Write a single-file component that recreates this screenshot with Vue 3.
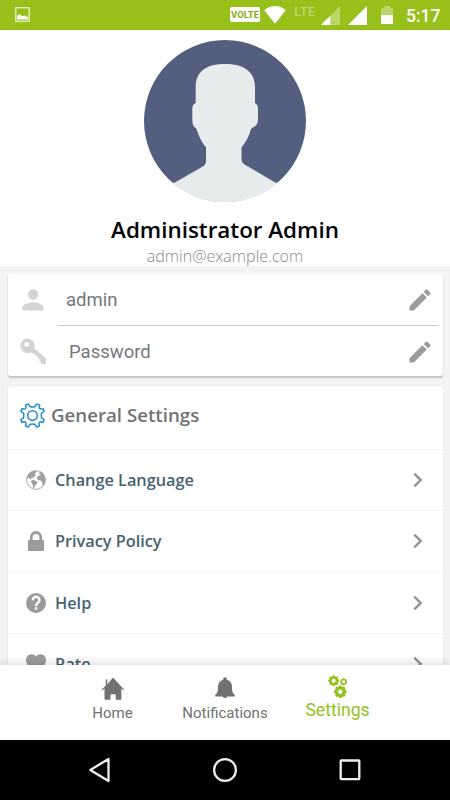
<script setup>
const fields = [
  { label: 'admin', icon: 'person' },
  { label: 'Password', icon: 'key' },
]
const rows = [
  { label: 'Change Language', icon: 'globe' },
  { label: 'Privacy Policy', icon: 'lock' },
  { label: 'Help', icon: 'help' },
  { label: 'Rate', icon: 'heart' },
]

function gear(cx, cy, teeth, outer, inner) {
  const points = []
  const step = (Math.PI * 2) / teeth
  for (let i = 0; i < teeth; i++) {
    const a = i * step - Math.PI / 2
    for (const [offset, r] of [[-0.3, inner], [-0.2, outer], [0.2, outer], [0.3, inner]]) {
      const t = a + offset * step
      points.push(`${(cx + r * Math.cos(t)).toFixed(2)} ${(cy + r * Math.sin(t)).toFixed(2)}`)
    }
  }
  return `M${points.join('L')}Z`
}
function ring(cx, cy, r) {
  return `M${cx - r} ${cy}a${r} ${r} 0 1 0 ${2 * r} 0a${r} ${r} 0 1 0 ${-2 * r} 0Z`
}
const gears = [
  gear(5.7, 5.7, 8, 5.6, 4.7) + ring(5.7, 5.7, 2),
  gear(15.6, 6.8, 8, 3.7, 3.1) + ring(15.6, 6.8, 1.5),
  gear(12.3, 16.7, 8, 6.4, 5.5) + ring(12.3, 16.7, 2.2),
].join('')
</script>

<template>
  <div class="screen">
    <div class="status">
      <svg class="picture" width="15" height="15" viewBox="0 0 15 15">
        <rect x=".75" y=".75" width="13.5" height="13.5" fill="none" stroke="#dcebb0" stroke-width="1.5" />
        <path d="M2 12.5V9l1.5-1.3 1.4-.4 2.2 2.2 2-1 2 1 1.9.5v2.5z" fill="#fff" />
      </svg>
      <span class="volte">VOLTE</span>
      <svg class="wifi" width="22" height="18" viewBox="0 0 22 18"><path d="M.3 4.2Q11-4 21.700 4.200L11 17.800z" fill="#fff" /></svg>
      <span class="lte">LTE</span>
      <svg class="signal-weak" width="19" height="19" viewBox="0 0 19 19">
        <path d="M0 19 19 0v19z" fill="#b9d766" /><path d="M0 19 9.300 9.700V19z" fill="#fff" />
      </svg>
      <svg class="signal" width="19" height="19" viewBox="0 0 19 19"><path d="M0 19 19 0v19z" fill="#fff" /></svg>
      <svg class="battery" width="12" height="18" viewBox="0 0 12 18">
        <path d="M0 3q0-1 1-1h2V0h6v2h2q1 0 1 1v6H0z" fill="#b9d766" /><path d="M0 9h12v8q0 1-1 1H1q-1 0-1-1z" fill="#fff" />
      </svg>
      <span class="time">5:17</span>
    </div>

    <header class="profile">
      <svg class="avatar" width="162" height="162" viewBox="0 0 162 162">
        <defs>
          <clipPath id="disc"><circle cx="81" cy="81" r="81" /></clipPath>
          <clipPath id="shoulders"><path d="M0 142.700h162V162H0z" /></clipPath>
        </defs>
        <circle cx="81" cy="81" r="81" fill="#545f80" />
        <circle cx="81" cy="81" r="81.300" fill="#e6ecec" clip-path="url(#shoulders)" />
        <path clip-path="url(#disc)" d="M81 24C63 24 51.700 31 51.700 47v16c-2.500 1-3.400 3-3.400 6v11c0 4 1 7 4 8.500 2.500 8 5.700 14 9.700 19v13c0 3-1 5-4 6.500L30 143v2h102v-2l-28-16.500c-4-2-6.500-4-6.500-6.500v-12.500c4-5 7.500-11 9.700-19 4-1.500 6.800-4.500 6.800-8.500V69c0-3-1-5-3-6V47c0-16-12-23-30-23z" fill="#e6ecec" />
      </svg>
      <h1 class="name">Administrator Admin</h1>
      <p class="email">admin@example.com</p>
    </header>

    <main class="content">
      <section class="card account">
        <div v-for="f in fields" :key="f.label" class="field" :class="f.icon">
          <div class="field-icon">
            <svg v-if="f.icon === 'person'" width="22" height="22" viewBox="0 0 22 22" fill="#d3d3d3">
              <circle cx="11" cy="5.500" r="5.200" /><path d="M.5 21.500v-3C.5 15.500 6 13.500 11 13.500s10.500 2 10.500 5v3z" />
            </svg>
            <svg v-else width="26" height="26" viewBox="0 0 26 26" fill="#d3d3d3" fill-rule="evenodd">
              <path d="M7.700.5a7.300 7.300 0 1 0 3.300 13.800l1.300 1.200 3 .2.300 2.300 2.200.2.200 1.300 1.400 1.100v2.600h1.700v2.500l4.800.2v-5.300L14.200 10.200A7.300 7.300 0 0 0 7.700.5zM6.700 4a2.400 2.400 0 1 1 0 4.800 2.400 2.400 0 0 1 0-4.800z" />
            </svg>
          </div>
          <div class="field-body">
            <span class="value">{{ f.label }}</span>
            <svg width="28" height="28" viewBox="0 0 24 24" fill="#9b9b9b">
              <path d="M3 17.250V21h3.750L17.810 9.940l-3.750-3.750zM20.710 7.040a1 1 0 0 0 0-1.410l-2.340-2.340a1 1 0 0 0-1.410 0l-1.830 1.830 3.750 3.750z" />
            </svg>
          </div>
        </div>
      </section>

      <section class="card settings">
        <div class="heading">
          <svg width="25" height="25" viewBox="0 0 26 26" fill="none" stroke="#2490cf" stroke-width="1.600" stroke-linejoin="round">
            <circle cx="13" cy="13" r="5" />
            <path d="M8.700 1 10.300 3.600Q13 4.600 15.700 3.600L17.300 1 20.500 2.200 19.900 5.200Q20.700 6.300 22.500 6.300L24.100 6 25 8.700 22.500 10.200Q21.600 13 22.500 15.800L25 17.300 24.100 20 21.500 19.500Q20 20 19.700 21.200L20.300 23.800 17.300 25 15.700 22.400Q13 21.400 10.300 22.400L8.700 25 5.700 23.800 6.300 21.200Q6 20 4.500 19.500L1.900 20 1 17.300 3.500 15.800Q4.400 13 3.500 10.200L1 8.700 1.900 6 4.500 6.500Q6 6 6.300 4.800L5.700 2.200Z" />
          </svg>
          <h2>General Settings</h2>
        </div>
        <div v-for="r in rows" :key="r.label" class="row">
          <svg v-if="r.icon === 'globe'" class="row-icon" width="20" height="20" viewBox="0 0 20 20">
            <circle cx="10" cy="10" r="9.400" fill="#fff" stroke="#aaa" />
            <path d="M6 1.200 10.800.7 10 3 8.200 3.500 9.900 5 8 7.200 5.500 8 4.400 9.500 2.500 7.700.8 8.300C1.300 5 3 2.600 6 1.200zM5.800 10.200l2-.3 3.700 2-.7 2.200-2 1.600-.8 2.700-1-.3-.4-3.700-1.600-2.300zM12.700 3.200l1.800-1.600C17.500 3 19.200 6 19.400 9.500c.1 2.500-.9 5-2.500 6.800l-.6-2.200-.2-2.700-1.700-1-2.600-.3-1-2 1.300-2.400 2.400-.4-.1-1.100z" fill="#a0a0a0" />
          </svg>
          <svg v-else-if="r.icon === 'lock'" class="row-icon" width="20" height="20" viewBox="0 0 20 20">
            <path d="M5.200 11V6.300a4.800 4.800 0 0 1 9.600 0V11" fill="none" stroke="#9b9b9b" stroke-width="2.800" /><rect x="2" y="9" width="16" height="11" rx="1" fill="#9b9b9b" />
          </svg>
          <svg v-else-if="r.icon === 'help'" class="row-icon" width="20" height="20" viewBox="0 0 20 20">
            <circle cx="10" cy="10" r="10" fill="#9b9b9b" /><path d="M6.800 7.200A3.300 3.300 0 1 1 12 9.800Q10.100 11.100 10.100 13" fill="none" stroke="#fff" stroke-width="2.400" /><circle cx="10.100" cy="15.500" r="1.400" fill="#fff" />
          </svg>
          <svg v-else class="row-icon" width="20" height="20" viewBox="0 0 20 20"><path d="M10 2.500C7.300-1.500 0-.2 0 6.300c0 5 5.500 9.200 10 12.700 4.500-3.500 10-7.700 10-12.700C20-.2 12.700-1.500 10 2.500z" fill="#9b9b9b" /></svg>
          <span class="row-label">{{ r.label }}</span>
          <svg width="10" height="16" viewBox="0 0 10 16" fill="none" stroke="#969696" stroke-width="2.500"><path d="m1.300 1.600 6.500 6.400-6.500 6.400" /></svg>
        </div>
      </section>
    </main>

    <nav class="tabs">
      <div class="tab">
        <svg width="24" height="23" viewBox="0 0 24 23" fill="#717171"><path d="M4.800 2.500h1.500v5L12 .5 23 12.400l-.7.900-1.900-1.800V22q0 .8-.8.800h-4.900v-4.500q0-1-1-1h-3.200q-1 0-1 1v4.500H4.300q-.8 0-.8-.8V11.500l-2 1.800-.7-.9 4-3.800z" /></svg>
        <span>Home</span>
      </div>
      <div class="tab">
        <svg width="22" height="23" viewBox="0 0 22 23" fill="#717171"><path d="M9.200 2.800V2a1.800 1.800 0 0 1 3.600 0v.8c3.500.7 5.200 3.400 5.200 7 0 4.800.6 6.500 2.800 8.200v1.500h-7.600a2.300 2.300 0 0 1-4.400 0H1.200V18C3.400 16.300 4 14.600 4 9.800c0-3.600 1.700-6.300 5.200-7z" /></svg>
        <span>Notifications</span>
      </div>
      <div class="tab active">
        <svg width="20" height="24" viewBox="0 0 20 24"><path :d="gears" fill="#95c11f" fill-rule="evenodd" /></svg>
        <span>Settings</span>
      </div>
    </nav>

    <div class="system">
      <svg width="22" height="26" viewBox="0 0 22 26"><path d="M19.500 2v22L1.300 13z" /></svg>
      <svg width="26" height="26" viewBox="0 0 26 26"><circle cx="13" cy="13" r="10.900" /></svg>
      <svg width="22" height="26" viewBox="0 0 22 26"><rect x="1.700" y="3.500" width="18.600" height="18.600" rx=".5" /></svg>
    </div>
  </div>
</template>

<style>
body { margin: 0; overflow: hidden; }
</style>

<style scoped>
.screen { width: 450px; height: 800px; display: flex; flex-direction: column; overflow: hidden; background: #f4f4f4; font-family: Roboto, sans-serif; }
svg { display: block; flex: none; }
h1, h2, p { margin: 0; font-weight: inherit; }
.status { height: 30px; flex: none; display: flex; align-items: flex-start; box-sizing: border-box; padding: 6px 0 0 15px; background: #97c11a; border-bottom: 1px solid #91bb15; color: #fff; }
.picture { margin-top: 1px; margin-right: auto; }
.volte { width: 30px; height: 15px; margin: 1px 4px 0 0; border-radius: 2px; background: #fff; color: #82ad10; font: 700 9.500px/16px Roboto, sans-serif; text-align: center; }
.lte { width: 27px; margin-left: 8px; color: #b9d766; font: 500 13.500px/11px Roboto, sans-serif; }
.signal { margin-left: 8px; }
.battery { margin-left: 14px; }
.time { width: 44px; margin-left: 13px; font: 500 17.500px/20px Roboto, sans-serif; white-space: nowrap; }
.profile { height: 236px; flex: none; display: flex; flex-direction: column; align-items: center; box-sizing: border-box; padding-top: 10px; background: #fff; font-family: "Open Sans", sans-serif; }
.name { margin-top: 13px; font-size: 22.400px; line-height: 30px; font-weight: 600; color: #000; white-space: nowrap; }
.email { font-size: 16.100px; line-height: 22px; font-weight: 300; color: #888; }
.content { flex: 1; min-height: 0; overflow: hidden; padding: 8px 7.500px 0 8px; }
.card { background: #fff; border-radius: 3px; }
.account { height: 102px; box-shadow: 0 2px 2px #c2c2c2; }
.field { height: 51px; display: flex; padding-right: 4px; }
.field-icon { width: 49px; flex: none; display: flex; align-items: center; justify-content: center; }
.field-body { flex: 1; display: flex; align-items: center; justify-content: space-between; box-sizing: border-box; padding: 1px 5px 0 9px; }
.person .field-body { border-bottom: 1px solid #ccc; height: 52px; padding-top: 0; }
.key .field-body { padding-left: 12px; padding-top: 2px; }
.value { font-size: 18.500px; line-height: 24px; color: #74787d; }
.settings { margin-top: 10px; box-shadow: 0 0 2px #ddd; }
.heading { height: 63px; display: flex; align-items: center; box-sizing: border-box; padding: 0 0 5px 12px; gap: 6px; }
.heading h2 { font: 600 18.700px/26px "Open Sans", sans-serif; color: #737373; }
.row { height: 61.300px; display: flex; align-items: center; box-sizing: border-box; border-top: 1px solid #f3f3f3; padding: 0 20px 0 18px; }
.row-label { flex: 1; margin-left: 9px; font: 600 16.300px/24px "Open Sans", sans-serif; color: #466370; }
.tabs { height: 75px; flex: none; display: flex; justify-content: center; background: #fff; box-shadow: 0 -2px 9px rgba(0, 0, 0, .14); z-index: 1; }
.tab { width: 112.500px; display: flex; flex-direction: column; align-items: center; box-sizing: border-box; padding-top: 12px; color: #717171; font-size: 15px; line-height: 20px; white-space: nowrap; }
.tab span { margin-top: 3px; }
.tab.active { padding-top: 10px; color: #95c11f; font-size: 17.600px; line-height: 22px; }
.tab.active span { margin-top: 0; }
.system { height: 60px; flex: none; display: flex; justify-content: center; align-items: center; gap: 101px; background: #000; }
.system svg { fill: none; stroke: #eee; stroke-width: 2.300; stroke-linejoin: round; }
</style>
